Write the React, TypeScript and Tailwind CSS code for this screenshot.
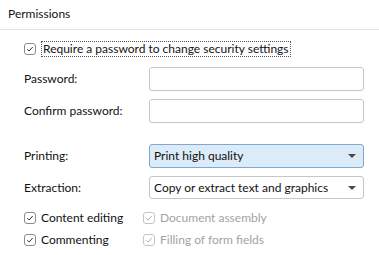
import { ReactNode } from "react";

function Check({ disabled }: { disabled?: boolean }) {
  return (
    <span
      className={`flex h-[12px] w-[12px] shrink-0 items-center justify-center rounded-[3px] border bg-white ${
        disabled ? "border-[#c4c4c4]" : "border-[#8c8c8c]"
      }`}
    >
      <svg width="8" height="8" viewBox="0 0 8 8" fill="none">
        <path
          d="M1.3 4.2 L3.1 6 L6.7 2"
          stroke={disabled ? "#b0b0b0" : "#333"}
          strokeWidth="1"
        />
      </svg>
    </span>
  );
}

function CheckItem({ label, disabled }: { label: string; disabled?: boolean }) {
  return (
    <div className="flex items-center gap-[5px]">
      <Check disabled={disabled} />
      <span className={disabled ? "text-[#a3a3a3]" : "text-[#111]"}>{label}</span>
    </div>
  );
}

function Row({ label, children, className = "" }: { label: string; children: ReactNode; className?: string }) {
  return (
    <div className={`flex items-center ${className}`}>
      <div className="w-[125px]">{label}</div>
      {children}
    </div>
  );
}

function Caret() {
  return (
    <svg width="8" height="4" viewBox="0 0 8 4" className="ml-auto">
      <path d="M0 0 H8 L4 4 Z" fill="#4a4a4a" />
    </svg>
  );
}

export default function App() {
  return (
    <div
      className="h-[255px] w-[379px] overflow-hidden bg-white text-[12px] text-[#111]"
      style={{ fontFamily: 'Lato, "Noto Sans", sans-serif' }}
    >
      {/* Header */}
      <div className="flex h-[30px] items-center border-b border-[#e3e3e3] px-[8px] pb-[2px]">
        Permissions
      </div>

      <div className="pl-[24px] pr-[15px]">
        <div className="mt-[11px] flex items-center gap-[5px]">
          <Check />
          <span className="border border-dotted border-[#555] px-[1px] leading-[14px]">
            Require a password to change security settings
          </span>
        </div>

        <Row label="Password:" className="mt-[10px]">
          <div className="h-[24px] flex-1 rounded-[3px] border border-[#c6c6c6] bg-white" />
        </Row>
        <Row label="Confirm password:" className="mt-[8px]">
          <div className="h-[24px] flex-1 rounded-[3px] border border-[#c6c6c6] bg-white" />
        </Row>

        <Row label="Printing:" className="mt-[21px]">
          <div className="flex h-[24px] flex-1 items-center rounded-[3px] border border-[#7fa7cf] bg-[#dcebf8] pl-[4px] pr-[7px]">
            Print high quality
            <Caret />
          </div>
        </Row>
        <Row label="Extraction:" className="mt-[8px]">
          <div className="flex h-[23px] flex-1 items-center rounded-[3px] border border-[#c6c6c6] bg-white pl-[4px] pr-[7px]">
            Copy or extract text and graphics
            <Caret />
          </div>
        </Row>

        <div className="mt-[11px] grid grid-cols-[119px_1fr] gap-y-[6px] leading-[16px]">
          <CheckItem label="Content editing" />
          <CheckItem label="Document assembly" disabled />
          <CheckItem label="Commenting" />
          <CheckItem label="Filling of form fields" disabled />
        </div>
      </div>
    </div>
  );
}
